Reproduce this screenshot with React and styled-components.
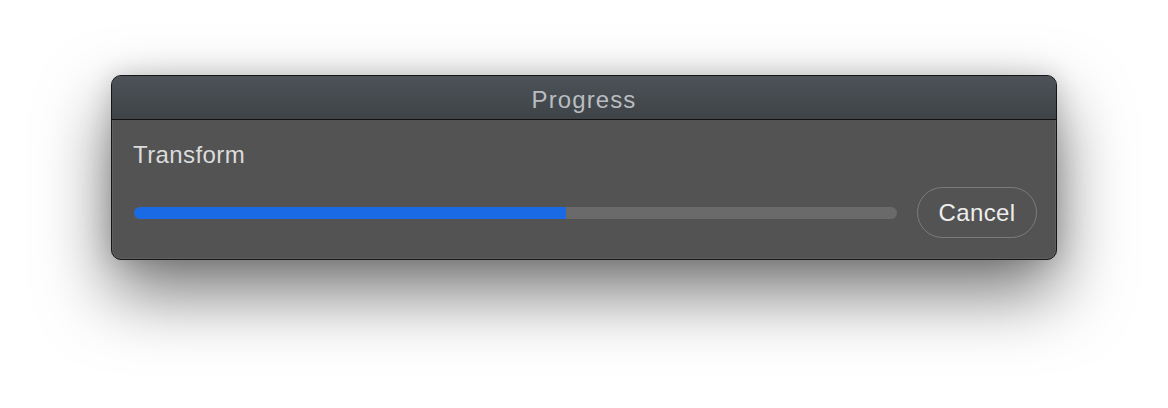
import React from "react";
import styled, { createGlobalStyle } from "styled-components";

const GlobalStyle = createGlobalStyle`
	html, body {
		margin: 0;
		padding: 0;
		background: #ffffff;
	}
	body {
		font-family: "Liberation Sans", Arial, sans-serif;
	}
`;

const Page = styled.div`
	width: 1168px;
	height: 408px;
	padding: 75px 0 0 111px;
	box-sizing: border-box;
	overflow: hidden;
`;

const Window = styled.div`
	width: 946px;
	box-sizing: border-box;
	border: 1px solid #161616;
	border-radius: 10px;
	overflow: hidden;
	background: #535353;
	box-shadow: 0 32px 70px rgba(0, 0, 0, 0.55), 0 0 26px rgba(0, 0, 0, 0.16),
		inset 0 0 0 1px rgba(255, 255, 255, 0.08);
`;

const TitleBar = styled.div`
	height: 44px;
	display: flex;
	align-items: center;
	justify-content: center;
	background: linear-gradient(#4c5257, #3e4347);
	border-bottom: 1px solid #121212;
	color: #b9bdc1;
	font-size: 24px;
	letter-spacing: 1.1px;
	padding-top: 4px;
	box-sizing: border-box;
`;

const Body = styled.div`
	display: flex;
	flex-direction: column;
	gap: 18px;
	padding: 21px 19px 21px 21px;
`;

const Label = styled.div`
	color: #dcdcdc;
	font-size: 24px;
	line-height: 28px;
	letter-spacing: 0.4px;
`;

const Row = styled.div`
	display: flex;
	align-items: center;
	gap: 20px;
`;

const Track = styled.div`
	flex: 1;
	height: 12px;
	margin-left: 1px;
	border-radius: 6px;
	background: #6a6a6a;
	overflow: hidden;
`;

const Fill = styled.div`
	height: 100%;
	background: #1a69e5;
	border-radius: 6px 0 0 6px;
`;

const Button = styled.button`
	width: 120px;
	height: 51px;
	border-radius: 26px;
	border: 1.5px solid #7c7c7c;
	background: transparent;
	color: #ededed;
	font-family: "Liberation Sans", Arial, sans-serif;
	font-size: 24px;
	letter-spacing: 0.4px;
	padding: 0;
	cursor: default;
`;

export default function App() {
	const progress = 56.6;
	return (
		<Page>
			<GlobalStyle />
			<Window>
				<TitleBar>Progress</TitleBar>
				<Body>
					<Label>Transform</Label>
					<Row>
						<Track>
							<Fill style={{ width: `${progress}%` }} />
						</Track>
						<Button>Cancel</Button>
					</Row>
				</Body>
			</Window>
		</Page>
	);
}
